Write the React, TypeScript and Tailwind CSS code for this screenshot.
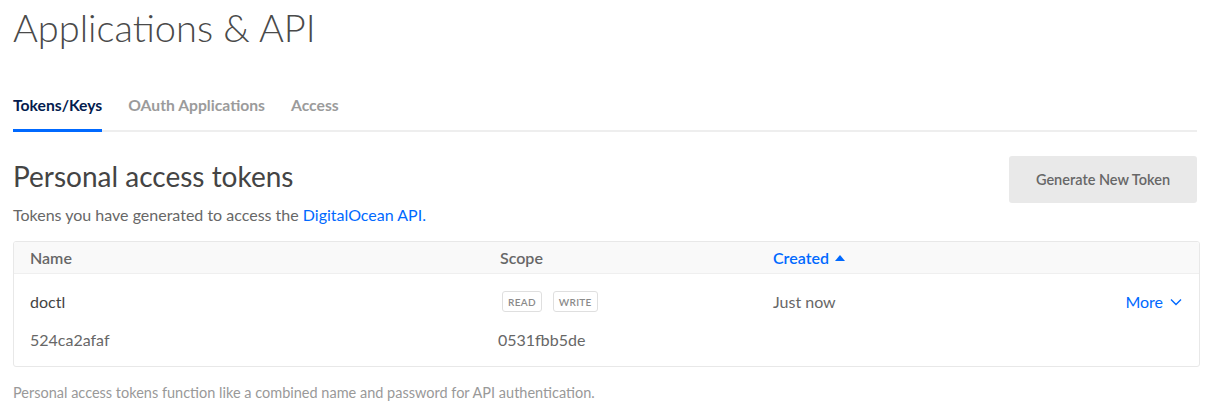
import React from 'react';

const font = { fontFamily: 'Lato, "Open Sans", "Liberation Sans", sans-serif' };

const Badge: React.FC<{ label: string }> = ({ label }) => (
  <span className="inline-flex h-[21px] items-center rounded-[3px] border border-[#dfdfdf] px-[5px] text-[10px] font-semibold tracking-[0.3px] text-[#8a8a8a]">
    {label}
  </span>
);

export default function App() {
  return (
    <div className="min-h-[414px] w-[1206px] bg-white pl-[13px] pr-[6px]" style={font}>
      <h1 className="pt-[4px] text-[38px] font-light leading-[46px] text-[#4a4a4a]">Applications &amp; API</h1>

      {/* Tabs */}
      <div className="mt-[45px] mr-[3px] flex gap-[26px] border-b-2 border-[#eeeeee] text-[15.7px] leading-[20px] font-bold">
        <div className="-mb-[2px] border-b-[3px] border-[#0069ff] pb-[14px] text-[#031b4e]">Tokens/Keys</div>
        <div className="pb-[14px] text-[#9b9b9b]">OAuth Applications</div>
        <div className="pb-[14px] text-[#9b9b9b]">Access</div>
      </div>

      {/* Section header */}
      <div className="mt-[24px] mr-[3px] flex items-start justify-between">
        <div>
          <h2 className="pt-[4px] text-[28px] leading-[32px] text-[#444444]">Personal access tokens</h2>
          <p className="mt-[11px] text-[16px] leading-[24px] text-[#676767]">
            Tokens you have generated to access the <span className="text-[#0069ff]">DigitalOcean API.</span>
          </p>
        </div>
        <button className="h-[47px] w-[188px] rounded-[3px] bg-[#e9e9e9] text-[14.5px] font-semibold text-[#676767]">
          Generate New Token
        </button>
      </div>

      {/* Table */}
      <div className="mt-[14px] overflow-hidden rounded-[3px] border border-[#e8e8e8] text-[16px] leading-[24px]">
        <div className="grid h-[32px] grid-cols-[470px_273px_1fr] items-center border-b border-[#efefef] bg-[#f9f9f9] px-4 font-semibold text-[#676767]">
          <div>Name</div>
          <div>Scope</div>
          <div className="flex items-center gap-[6px] text-[#0069ff]">
            Created
            <svg width="10" height="6" viewBox="0 0 10 6">
              <path d="M0 6 L5 0 L10 6 Z" fill="#0069ff" />
            </svg>
          </div>
        </div>
        <div className="grid grid-cols-[470px_273px_1fr] px-4 pt-[17px] pb-[14px] text-[#444444]">
          <div className="flex h-[21px] items-center">doctl</div>
          <div className="flex h-[21px] items-center gap-[11px] pl-[2px]">
            <Badge label="READ" />
            <Badge label="WRITE" />
          </div>
          <div className="flex h-[21px] items-center justify-between">
            <span className="text-[#676767]">Just now</span>
            <span className="flex items-center gap-[7px] pr-[1px] text-[#0069ff]">
              More
              <svg width="12" height="8" viewBox="0 0 12 8" fill="none">
                <path d="M1 1.5 L6 6.5 L11 1.5" stroke="#0069ff" strokeWidth="1.4" />
              </svg>
            </span>
          </div>
          <div className="mt-[16px] text-[#676767]">524ca2afaf</div>
          <div className="mt-[16px] -ml-[2px] text-[#676767]">0531fbb5de</div>
          <div />
        </div>
      </div>

      <p className="mt-[16px] text-[14.5px] leading-[20px] text-[#999999]">
        Personal access tokens function like a combined name and password for API authentication.
      </p>
    </div>
  );
}
